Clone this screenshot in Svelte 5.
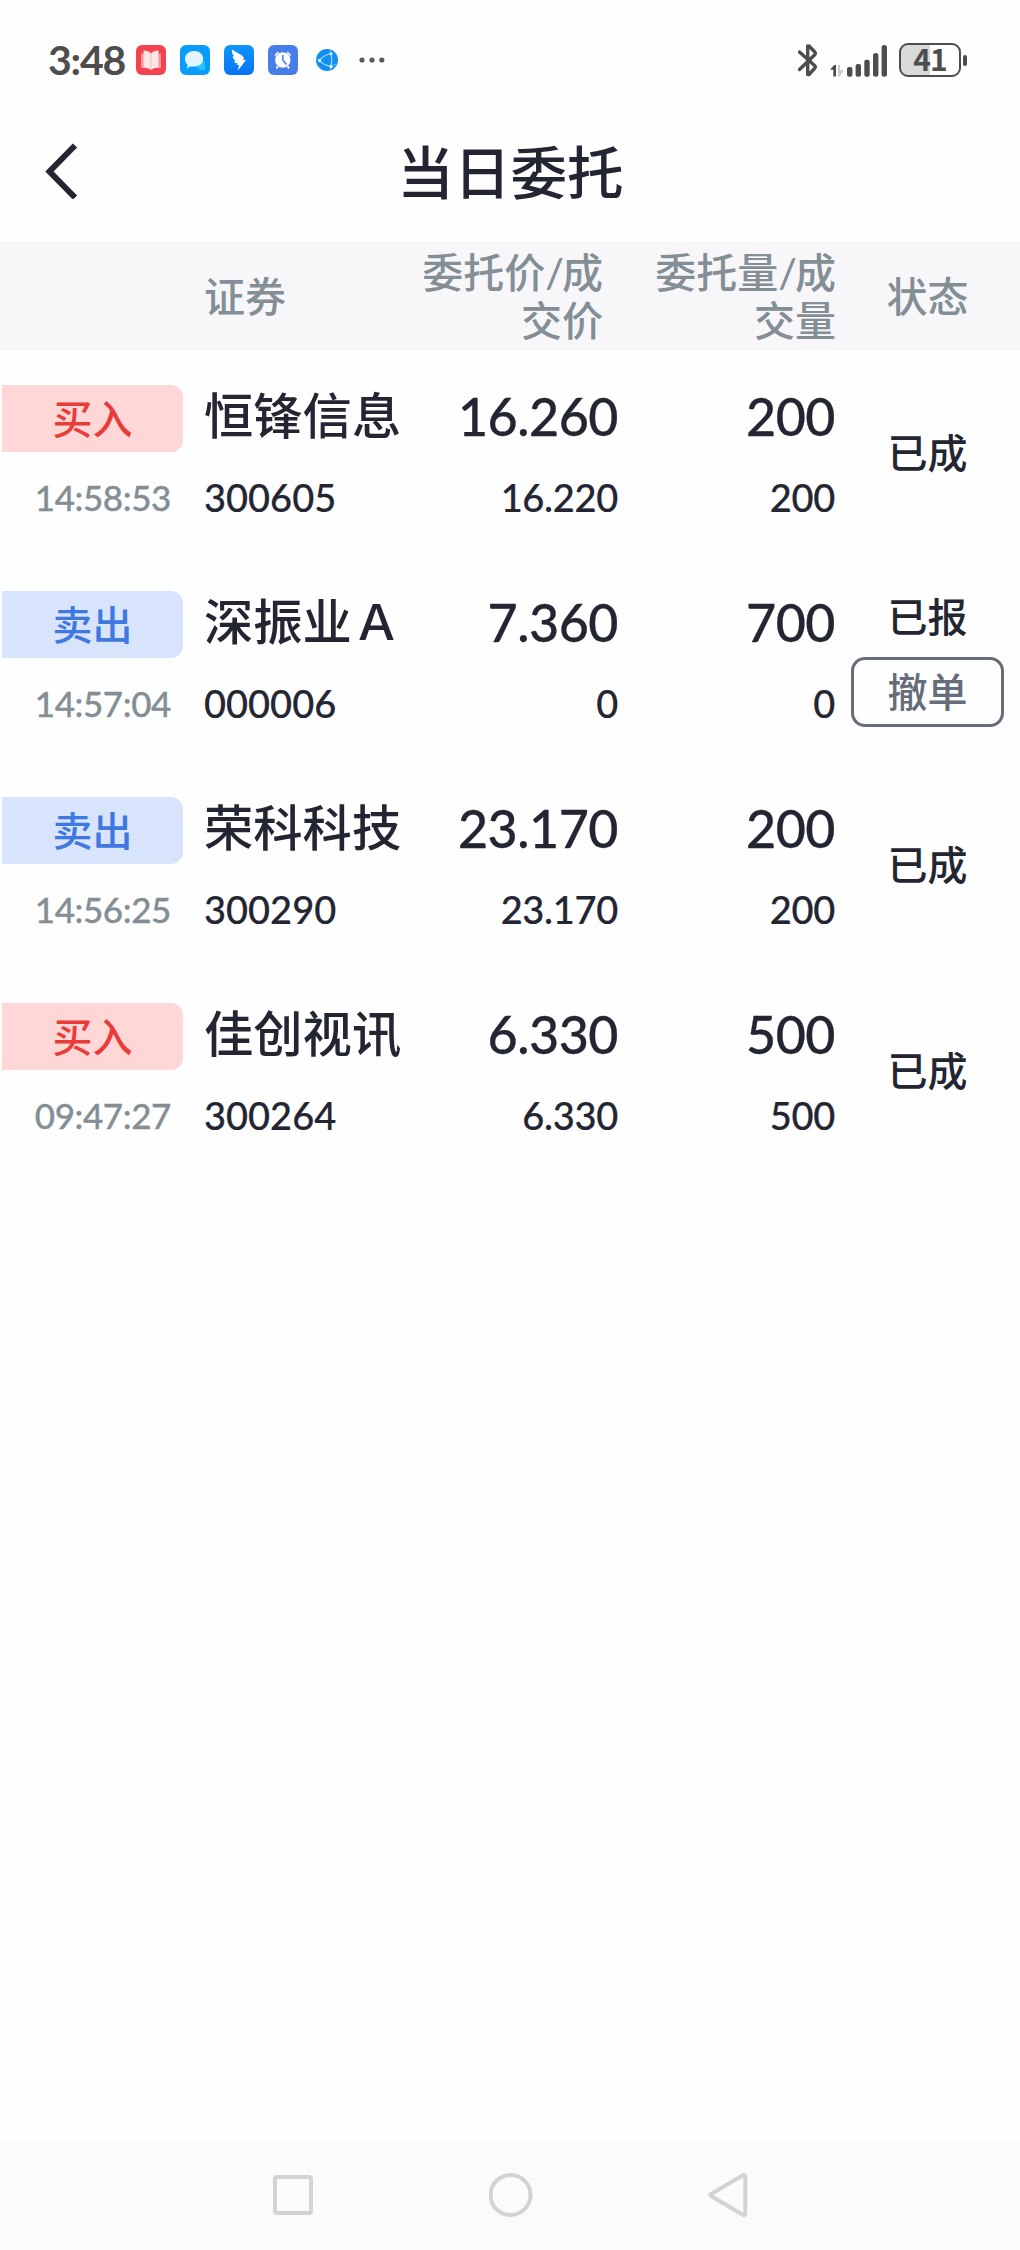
<script>
	const orders = [
		{ side: 'buy', time: '14:58:53', name: '恒锋信息', code: '300605', price: '16.260', dealPrice: '16.220', amount: '200', dealAmount: '200', status: '已成' },
		{ side: 'sell', time: '14:57:04', name: '深振业Ａ', code: '000006', price: '7.360', dealPrice: '0', amount: '700', dealAmount: '0', status: '已报', canCancel: true },
		{ side: 'sell', time: '14:56:25', name: '荣科科技', code: '300290', price: '23.170', dealPrice: '23.170', amount: '200', dealAmount: '200', status: '已成' },
		{ side: 'buy', time: '09:47:27', name: '佳创视讯', code: '300264', price: '6.330', dealPrice: '6.330', amount: '500', dealAmount: '500', status: '已成' }
	];

	const sideText = { buy: '买入', sell: '卖出' };
</script>

<div class="screen">
	<div class="status-bar">
		<span class="clock">3:48</span>
		<div class="apps">
			<svg width="30" height="30" viewBox="0 0 30 30">
				<rect width="30" height="30" rx="6" fill="#f2434f" />
				<path d="M5 8.5 H25 V23 H5 Z" fill="#f8959b" />
				<path d="M7.5 5.5 Q12.5 5.5 15 8.5 Q17.5 5.5 22.500 5.5 V22.5 Q17.500 22.5 15 25 Q12.5 22.5 7.5 22.5 Z" fill="#fde6e6" />
				<path d="M15 8.5 V25" stroke="#f9c0c2" stroke-width="1" />
			</svg>
			<svg width="30" height="30" viewBox="0 0 30 30">
				<rect width="30" height="30" rx="6" fill="#0a9cfd" />
				<path d="M20 16.5 H24.8 V22 L25.5 25 H20.5 A4.500 4.500 0 0 1 17 19 Z" fill="#22c4ff" />
				<path d="M14 6 C19.500 6 23.2 9.2 23.2 13.8 C23.2 18.6 19 21.6 14 21.6 L10 21.5 L7 23.5 L7.5 19.5 C5.7 18 5 16.2 5 13.8 C5 9.2 9 6 14 6 Z" fill="#e2f4ff" />
			</svg>
			<svg width="30" height="30" viewBox="0 0 30 30">
				<defs>
					<linearGradient id="wing" x1="0" y1="0" x2="0" y2="1">
						<stop offset="0" stop-color="#0c96fd" />
						<stop offset="1" stop-color="#0a72f8" />
					</linearGradient>
				</defs>
				<rect width="30" height="30" rx="6" fill="url(#wing)" />
				<path d="M8 4.5 C13 8 19.5 10 19.8 13 L19.5 15 H22 L14 25.5 L15 20 H12.5 L14 18.5 C11.5 18.5 10.5 17.5 10 16 L12 16 C9.5 14.5 8.8 13 8.7 11 L10.5 11.5 C8.3 9.5 7.7 7 8 4.5 Z" fill="#fff" />
			</svg>
			<svg width="30" height="30" viewBox="0 0 30 30">
				<rect width="30" height="30" rx="6" fill="#477de6" />
				<path d="M7.8 10 L9.8 8 M21.700 10 L19.700 8 M9 22.5 L10 21 M20.5 22.5 L19.5 21" stroke="#fff" stroke-width="2.2" stroke-linecap="round" />
				<circle cx="14.8" cy="15" r="8" fill="#fff" stroke="#477de6" stroke-width=".6" />
				<path d="M14.8 10 V15 L18.5 19.5" fill="none" stroke="#477de6" stroke-width="1.5" />
			</svg>
			<svg class="globe" width="22" height="22" viewBox="0 0 22 22">
				<circle cx="11" cy="11" r="11" fill="#128ff0" />
				<path d="M3 11.5 Q8 6 15 4.5 Q16.500 11 15 17.500 Q8 16 3 11.5" fill="none" stroke="#8fdcff" stroke-width="1.2" />
				<path d="M15 4.5 L14 .5 M15 17.5 L20 15 M15 17.5 L14 21.500 M3 11.5 L0 9" stroke="#5fc4f8" stroke-width="1" />
				<circle cx="3.5" cy="11.5" r="1.5" fill="#fff" />
				<circle cx="15" cy="4.8" r="1.5" fill="#d9f4ff" />
				<circle cx="15" cy="17.5" r="1.6" fill="#fff" />
			</svg>
			<svg class="dots" width="26" height="6" viewBox="0 0 26 6">
				<circle cx="3" cy="3" r="2.6" /><circle cx="13" cy="3" r="2.6" /><circle cx="22.8" cy="3" r="2.6" />
			</svg>
		</div>
		<div class="system">
			<svg width="20" height="33" viewBox="0 0 20 33">
				<path d="M1.5 8 L16.5 21.5 Q18 23 16.5 24.5 L11 30.5 H9.7 V2 H11 L16.8 8 Q18 9.5 16.5 11 L1.5 25.5" fill="none" stroke="#4d4d4d" stroke-width="3.4" stroke-linejoin="round" stroke-linecap="round" />
			</svg>
			<svg class="signal" width="57" height="33" viewBox="0 0 57 33">
				<path d="M0 25.5 L4.2 21 H6 V32.5 H3.3 V25.8 Z" fill="#4d4d4d" />
				<path d="M8 21 H10 V26 H14 L9.8 32.5 H8 Z" fill="#cbcbcb" />
				<g fill="#4d4d4d">
					<rect x="17" y="23" width="5.4" height="9.7" rx="2" />
					<rect x="25.6" y="20" width="5.4" height="12.7" rx="2" />
					<rect x="34.3" y="15.7" width="5.4" height="17" rx="2" />
					<rect x="43" y="9" width="5.4" height="23.7" rx="2.5" />
					<rect x="51.6" y="1" width="5.4" height="31.7" rx="2.5" />
				</g>
			</svg>
			<div class="battery"><span>41</span></div>
			<i class="nub"></i>
		</div>
	</div>

	<header>
		<button class="back" aria-label="返回">
			<svg width="34" height="56" viewBox="0 0 34 56">
				<path d="M30 2.5 L4.5 28.5 L30 54.5" fill="none" stroke="#232632" stroke-width="6" />
			</svg>
		</button>
		<h1>当日委托</h1>
	</header>

	<div class="columns head">
		<span class="h-name">证券</span>
		<span class="h-price">委托价<i>/</i>成<br />交价</span>
		<span class="h-amount">委托量<i>/</i>成<br />交量</span>
		<span class="h-status">状态</span>
	</div>

	<main>
		{#each orders as order}
			<div class="columns order">
				<div class="cell">
					<span class="badge {order.side}">{sideText[order.side]}</span>
					<span class="time">{order.time}</span>
				</div>
				<div class="cell">
					<span class="name">{order.name}</span>
					<span class="small">{order.code}</span>
				</div>
				<div class="cell right">
					<span class="big">{order.price}</span>
					<span class="small">{order.dealPrice}</span>
				</div>
				<div class="cell right">
					<span class="big">{order.amount}</span>
					<span class="small">{order.dealAmount}</span>
				</div>
				<div class="state">
					<span>{order.status}</span>
					{#if order.canCancel}
						<button class="cancel">撤单</button>
					{/if}
				</div>
			</div>
		{/each}
	</main>

	<nav>
		<svg width="44" height="44" viewBox="0 0 44 44"><rect x="4" y="4" width="36" height="36" rx="2" /></svg>
		<svg width="44" height="44" viewBox="0 0 44 44"><circle cx="21.500" cy="22" r="20" /></svg>
		<svg width="44" height="44" viewBox="0 0 44 44"><path d="M5.5 20.8 L37 2.2 Q39.3 1.5 39.3 4 V40 Q39.3 42.5 37 41.8 L5.5 23.2 Q3.5 22 5.5 20.8 Z" /></svg>
	</nav>
</div>

<style>
	:global(body) {
		margin: 0;
		background: #fefefe;
	}

	.screen {
		width: 1020px;
		height: 2250px;
		display: flex;
		flex-direction: column;
		background: #fefefe;
		color: #232632;
		font-family: Lato, 'Noto Sans CJK SC', sans-serif;
		font-weight: 500;
	}

	button {
		padding: 0;
		background: none;
		border: none;
		color: inherit;
		font: inherit;
	}

	svg {
		display: block;
		flex: none;
	}

	.status-bar {
		height: 120px;
		padding: 0 53px 0 48px;
		box-sizing: border-box;
		display: flex;
		align-items: center;
	}

	.clock {
		width: 88px;
		color: #4d4d4d;
		font-size: 41px;
		line-height: 50px;
		margin-top: -1px;
		font-weight: 700;
		letter-spacing: -1.2px;
		white-space: nowrap;
	}

	.apps {
		display: flex;
		align-items: center;
		gap: 14px;
	}

	.globe {
		margin-left: 4px;
	}

	.dots {
		margin-left: 7px;
		fill: #5a5a5a;
	}

	.system {
		margin-left: auto;
		display: flex;
		align-items: center;
	}

	.signal {
		margin-left: 12px;
	}

	.battery {
		width: 62px;
		height: 34px;
		margin-left: 12px;
		box-sizing: border-box;
		border: 2px solid #4d4d4d;
		border-radius: 9px;
		background: linear-gradient(90deg, #d9d9d9 29px, #fefefe 29px);
		color: #4d4d4d;
		font: 700 30px/27px 'Noto Sans CJK SC', sans-serif;
		letter-spacing: -1px;
		text-align: center;
	}

	.nub {
		width: 4px;
		height: 11px;
		margin-left: 2px;
		border-radius: 2px;
		background: #4d4d4d;
	}

	header {
		height: 122px;
		display: flex;
		align-items: flex-start;
	}

	.back {
		margin: 23px 0 0 45px;
	}

	h1 {
		flex: 1;
		margin: 0 78px 0 0;
		font-size: 56.6px;
		line-height: 104px;
		font-weight: 500;
		text-align: center;
	}

	.columns {
		display: grid;
		grid-template-columns: 204px 210px 204px 217px 185px;
	}

	.head {
		height: 108px;
		padding-top: 2px;
		box-sizing: border-box;
		align-items: center;
		background: #f7f7fa;
		color: #848e95;
		font-size: 41px;
		line-height: 48px;
		white-space: nowrap;
	}

	.head i {
		font-style: normal;
		letter-spacing: -2px;
	}

	.h-name {
		grid-column: 2;
	}

	.h-price {
		margin-right: 15px;
		justify-self: end;
		text-align: right;
	}

	.h-amount {
		margin-right: -1px;
		text-align: right;
	}

	.h-status {
		text-align: center;
	}

	.order {
		height: 206px;
	}

	.cell {
		padding-top: 35px;
		display: flex;
		flex-direction: column;
		gap: 16px;
		white-space: nowrap;
	}

	.right {
		text-align: right;
	}

	.badge {
		width: 181px;
		height: 67px;
		margin-left: 2px;
		border-radius: 0 12px 12px 0;
		font-size: 40px;
		line-height: 69px;
		text-align: center;
	}

	.buy {
		background: #ffd7d7;
		color: #e93c38;
	}

	.sell {
		background: #d8e4fc;
		color: #3f78e0;
	}

	.time {
		width: 171px;
		color: #848e95;
		font-size: 35px;
		line-height: 58px;
		height: 60px;
		letter-spacing: -0.4px;
		text-align: right;
		-webkit-text-stroke: 0.3px currentColor;
	}

	.name {
		font-size: 49.3px;
		line-height: 60px;
		height: 67px;
	}

	.big {
		font-size: 52px;
		line-height: 62px;
		height: 67px;
		letter-spacing: -0.5px;
		-webkit-text-stroke: 0.3px currentColor;
	}

	.small {
		font-size: 38px;
		line-height: 59px;
		height: 60px;
		-webkit-text-stroke: 0.2px currentColor;
	}

	.right .small {
		letter-spacing: -0.3px;
	}

	.state {
		display: flex;
		flex-direction: column;
		align-items: center;
		justify-content: center;
		gap: 15px;
		font-size: 40px;
		line-height: 50px;
	}

	.cancel {
		width: 153px;
		height: 70px;
		box-sizing: border-box;
		border: 3px solid #646d79;
		border-radius: 14px;
		color: #646d79;
	}

	nav {
		height: 110px;
		margin-top: auto;
		padding: 0 270px 0 271px;
		display: flex;
		align-items: center;
		justify-content: space-between;
		background: #fbfbfb;
	}

	nav svg {
		fill: none;
		stroke: #d3d3d3;
		stroke-width: 4;
	}
</style>
